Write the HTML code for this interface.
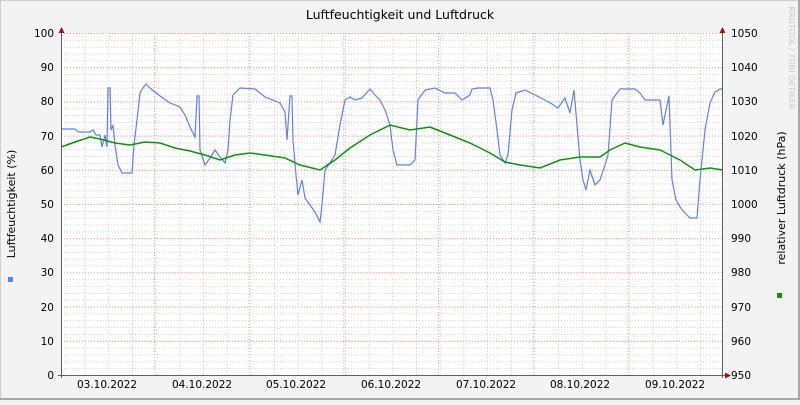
<!DOCTYPE html>
<html><head><meta charset="utf-8"><style>
html,body{margin:0;padding:0}
body{width:800px;height:400px;overflow:hidden;background:#f3f3f3}
svg text{font-family:"DejaVu Sans","Liberation Sans",sans-serif;font-size:10.5px;fill:#000}
</style></head><body>
<svg width="800" height="400" xmlns="http://www.w3.org/2000/svg">
<defs>
<pattern id="g" x="61" y="33" width="23.67" height="6.84" patternUnits="userSpaceOnUse">
<line x1="0.5" y1="0" x2="0.5" y2="6.84" stroke="#c8c8c8" stroke-width="1" stroke-dasharray="1,2"/>
<line x1="0" y1="0.5" x2="23.67" y2="0.5" stroke="#c8c8c8" stroke-width="1" stroke-dasharray="1,2"/>
</pattern>
<pattern id="mh" x="61" y="33" width="662" height="34.2" patternUnits="userSpaceOnUse">
<line x1="0" y1="0.5" x2="662" y2="0.5" stroke="#e8a0a0" stroke-width="1" stroke-dasharray="1,2"/>
</pattern>
<pattern id="mv" x="154" y="33" width="94.7" height="342" patternUnits="userSpaceOnUse">
<line x1="0.5" y1="0" x2="0.5" y2="342" stroke="#e8a0a0" stroke-width="1" stroke-dasharray="1,2"/>
</pattern>
</defs>
<rect x="0" y="0" width="800" height="400" fill="#f3f3f3"/>
<rect x="0.5" y="0.5" width="799" height="399" fill="none" stroke="#d0d0d0" stroke-width="1"/>
<rect x="798" y="0" width="2" height="400" fill="#a8a8a8"/>
<rect x="0" y="398" width="800" height="2" fill="#a8a8a8"/>
<rect x="61" y="33" width="662" height="342" fill="#ffffff"/>
<rect x="61" y="33" width="662" height="342" fill="url(#g)"/>
<rect x="61" y="33" width="662" height="342" fill="url(#mh)"/>
<rect x="61" y="33" width="662" height="342" fill="url(#mv)"/>
<text x="400" y="19" text-anchor="middle" style="font-size:12.5px">Luftfeuchtigkeit und Luftdruck</text>
<g text-anchor="end">
<text x="54" y="37">100</text><text x="54" y="71">90</text><text x="54" y="105">80</text><text x="54" y="140">70</text><text x="54" y="174">60</text><text x="54" y="208">50</text><text x="54" y="242">40</text><text x="54" y="276">30</text><text x="54" y="311">20</text><text x="54" y="345">10</text><text x="54" y="379">0</text>
</g>
<g>
<text x="731" y="37">1050</text><text x="731" y="71">1040</text><text x="731" y="105">1030</text><text x="731" y="140">1020</text><text x="731" y="174">1010</text><text x="731" y="208">1000</text><text x="731" y="242">990</text><text x="731" y="276">980</text><text x="731" y="311">970</text><text x="731" y="345">960</text><text x="731" y="379">950</text>
</g>
<g text-anchor="middle">
<text x="107" y="388">03.10.2022</text><text x="202" y="388">04.10.2022</text><text x="296" y="388">05.10.2022</text><text x="391" y="388">06.10.2022</text><text x="486" y="388">07.10.2022</text><text x="580" y="388">08.10.2022</text><text x="675" y="388">09.10.2022</text>
</g>
<text transform="translate(15,204) rotate(-90)" text-anchor="middle" style="font-size:11px">Luftfeuchtigkeit (%)</text>
<rect x="8" y="277" width="5" height="5" fill="#6080e8"/>
<text transform="translate(785,198) rotate(-90)" text-anchor="middle" style="font-size:11px">relativer Luftdruck (hPa)</text>
<rect x="777" y="293" width="5" height="5" fill="#109010"/>
<text transform="translate(789,58) rotate(90)" text-anchor="middle" style="font-size:8px;fill:#c8c8c8">RRDTOOL / TOBI OETIKER</text>
<polyline fill="none" stroke="#6080e8" stroke-width="1.2" points="61,129 75,129 78,132 90,132 93,130 96,135 100,135 102,147 105,135 107,147 108,88 110,88 111,130 113,125 115,145 118,165 122,173 132,173 134,145 137,120 140,93 143,88 146,84 150,88 160,96 170,103 180,107 185,115 190,127 195,137 197,96 199,96 200,150 205,165 210,158 215,150 220,157 225,163 228,150 230,120 233,95 240,88 255,89 265,97 280,103 285,112 287,140 290,96 292,96 293,140 296,175 298,195 302,180 305,198 310,205 315,212 320,222 322,205 325,170 330,163 335,155 340,125 345,100 350,97 355,100 362,98 370,89 375,95 380,100 385,110 390,125 393,150 397,165 410,165 415,160 418,100 425,90 435,88 445,93 455,93 462,100 470,95 472,89 478,88 490,88 493,100 497,130 500,155 505,163 508,155 512,110 516,93 525,90 535,95 545,100 552,104 558,108 565,98 570,113 574,90 577,125 580,160 583,180 586,190 590,170 595,185 600,180 605,165 608,155 612,100 620,89 635,89 640,93 645,100 660,100 663,125 666,110 669,96 672,180 676,200 680,207 685,213 690,218 697,218 700,180 705,130 710,103 715,92 720,89 723,89"/>
<polyline fill="none" stroke="#109010" stroke-width="1.5" points="61,147 75,142 90,137 100,139 115,143 130,145 145,142 160,143 175,148 190,151 205,155 220,160 235,155 250,153 265,155 285,158 300,165 320,170 335,160 350,148 370,135 390,125 410,130 430,127 450,135 470,143 490,153 505,162 520,165 540,168 560,160 580,157 600,157 610,150 625,143 640,147 660,150 680,160 695,170 710,168 723,170"/>
<line x1="61.5" y1="30" x2="61.5" y2="378" stroke="#606060" stroke-width="1"/>
<line x1="722.5" y1="30" x2="722.5" y2="378" stroke="#606060" stroke-width="1"/>
<line x1="58" y1="375.5" x2="726" y2="375.5" stroke="#606060" stroke-width="1"/>
<polygon points="58.5,33 64.5,33 61.5,27" fill="#a01010"/>
<polygon points="719.5,33 725.5,33 722.5,27" fill="#a01010"/>
<polygon points="725,372.5 725,378.5 731,375.5" fill="#a01010"/>
</svg>
</body></html>
